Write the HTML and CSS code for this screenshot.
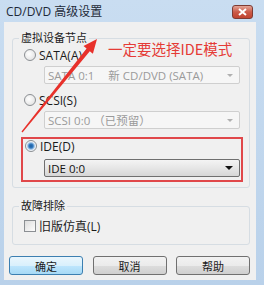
FILE: index.html
```html
<!DOCTYPE html>
<html>
<head>
	<meta charset="utf-8">
	<title>CD/DVD 高级设置</title>
	<link rel="stylesheet" href="styles.css">
</head>
<body>
	<div class="window">
		<div class="titlebar">
			<span class="title">CD/DVD 高级设置</span>
			<span class="close">
				<svg width="9" height="8" viewBox="0 0 9 8"><path d="M1 1 L8 7 M8 1 L1 7" stroke="#fff" stroke-width="2"/></svg>
			</span>
		</div>

		<div class="panel">
			<fieldset class="group">
				<legend>虚拟设备节点</legend>

				<div class="row">
					<span class="radio"></span>
					<span class="label">SATA(A)</span>
				</div>
				<div class="combo disabled first">
					<span>SATA 0:1<span class="gap">新 CD/DVD (SATA)</span></span>
					<i class="arrow"></i>
				</div>

				<div class="row second">
					<span class="radio"></span>
					<span class="label">SCSI(S)</span>
				</div>
				<div class="combo disabled first">
					<span>SCSI 0:0 （已预留）</span>
					<i class="arrow"></i>
				</div>

				<div class="mark">
					<div class="row inner">
						<span class="radio checked"></span>
						<span class="label">IDE(D)</span>
					</div>
					<div class="combo active">
						<span>IDE 0:0</span>
						<i class="arrow"></i>
					</div>
				</div>
			</fieldset>

			<fieldset class="group trouble">
				<legend>故障排除</legend>
				<div class="row">
					<span class="check"></span>
					<span class="label">旧版仿真(L)</span>
				</div>
			</fieldset>

			<div class="buttons">
				<button class="btn default">确定</button>
				<button class="btn">取消</button>
				<button class="btn">帮助</button>
			</div>
		</div>

		<!-- 标注 -->
		<span class="note">一定要选择IDE模式</span>
		<svg class="pointer" width="264" height="285" viewBox="0 0 264 285">
			<polygon fill="#e8312b" points="97,39 92.9,53.7 89.8,51.2 22.5,132.4 21.5,131.6 86.6,48.6 83.5,46.1"/>
		</svg>
	</div>
</body>
</html>
```

FILE: styles.css
```css
*{
	margin: 0;
	padding: 0;
	box-sizing: border-box;
}
body{
	font-family: "Open Sans", "Noto Sans CJK SC", sans-serif;
	font-size: 12px;
	color: #1b1b1b;
}
.window{
	position: relative;
	width: 264px;
	height: 285px;
	background: linear-gradient(#c9ddf1, #b9d1ea);
	padding: 0 8px 5px 4px;
	overflow: hidden;
}
.titlebar{
	display: flex;
	align-items: center;
	justify-content: space-between;
	height: 22px;
	padding: 0 3px 0 2px;
}
.title{
	font-size: 12px;
	color: #1e2a38;
}
.close{
	display: flex;
	align-items: center;
	justify-content: center;
	width: 21px;
	height: 14px;
	border: 1px solid #7e3b33;
	border-radius: 3px;
	background: linear-gradient(#e3a597, #cb5a48 50%, #c1432f);
	margin-top: 1px;
}
.panel{
	height: 258px;
	background: #f0f0f0;
	padding: 9px 6px 0 8px;
}
.group{
	border: 1px solid #d6dde3;
	border-radius: 3px;
	padding: 3px 0 5px 0;
}
.group legend{
	margin-left: 6px;
	padding: 0 2px;
	font-size: 11px;
	line-height: 14px;
}
.row{
	display: flex;
	align-items: center;
	height: 14px;
	padding-left: 11px;
}
.row.second{
	margin-top: 9px;
}
.row.inner{
	padding-left: 2px;
}
.label{
	margin-left: 3px;
}
.radio{
	width: 12px;
	height: 12px;
	border-radius: 50%;
	border: 1px solid #8b8f93;
	background: radial-gradient(circle at 40% 40%, #fff, #dcdcdc);
}
.radio.checked{
	background: radial-gradient(circle, #1c5c9c 0, #2f78c0 2px, #a9c9e8 3.5px, #eef3f8 4.5px);
}
.check{
	width: 12px;
	height: 12px;
	border: 1px solid #8b8f93;
	background: linear-gradient(135deg, #dcdcdc, #fdfdfd);
}
.combo{
	display: flex;
	align-items: center;
	justify-content: space-between;
	height: 18px;
	width: 196px;
	margin: 4px 0 0 31px;
	padding: 0 6px 0 3px;
	border: 1px solid #cfcfcf;
	border-radius: 2px;
	font-size: 11.5px;
}
.combo + .row{
	margin-top: 9px;
}
.combo.disabled{
	background: #f6f6f6;
	color: #9a9a9a;
}
.combo.disabled .arrow{
	border-top-color: #b0b0b0;
	border-width: 3px 3px 0;
}
.combo .gap{
	margin-left: 14px;
}
.combo.active{
	margin: 6px 0 0 21px;
	background: linear-gradient(#f4f4f4, #e6e6e6 50%, #d6d6d6);
	border-color: #6f6f6f;
	color: #111;
}
.arrow{
	width: 0;
	height: 0;
	border-style: solid;
	border-width: 4px 4px 0;
	border-color: #111 transparent transparent;
}
.mark{
	margin: 8px 0 0 8px;
	width: 222px;
	border: 2px solid #e0474a;
	padding-bottom: 3px;
}
.trouble{
	margin-top: 11px;
	padding: 6px 0 11px;
}
.buttons{
	display: flex;
	justify-content: space-between;
	margin: 11px 0 0 -3px;
}
.btn{
	width: 74px;
	height: 19px;
	font-family: "Noto Sans CJK SC", sans-serif;
	font-size: 11px;
	color: #1b1b1b;
	border: 1px solid #707070;
	border-radius: 3px;
	background: linear-gradient(#f2f2f2, #ebebeb 50%, #dddddd 51%, #cfcfcf);
}
.btn.default{
	border-color: #3c7fb1;
	background: linear-gradient(#eaf6fd, #d9f0fc 50%, #bee6fd 51%, #a7d9f5);
}
.note{
	position: absolute;
	left: 108px;
	top: 40px;
	font-family: "Noto Sans CJK SC", sans-serif;
	font-size: 14.5px;
	line-height: 18px;
	color: #e53b36;
}
.pointer{
	position: absolute;
	left: 0;
	top: 0;
}
```
